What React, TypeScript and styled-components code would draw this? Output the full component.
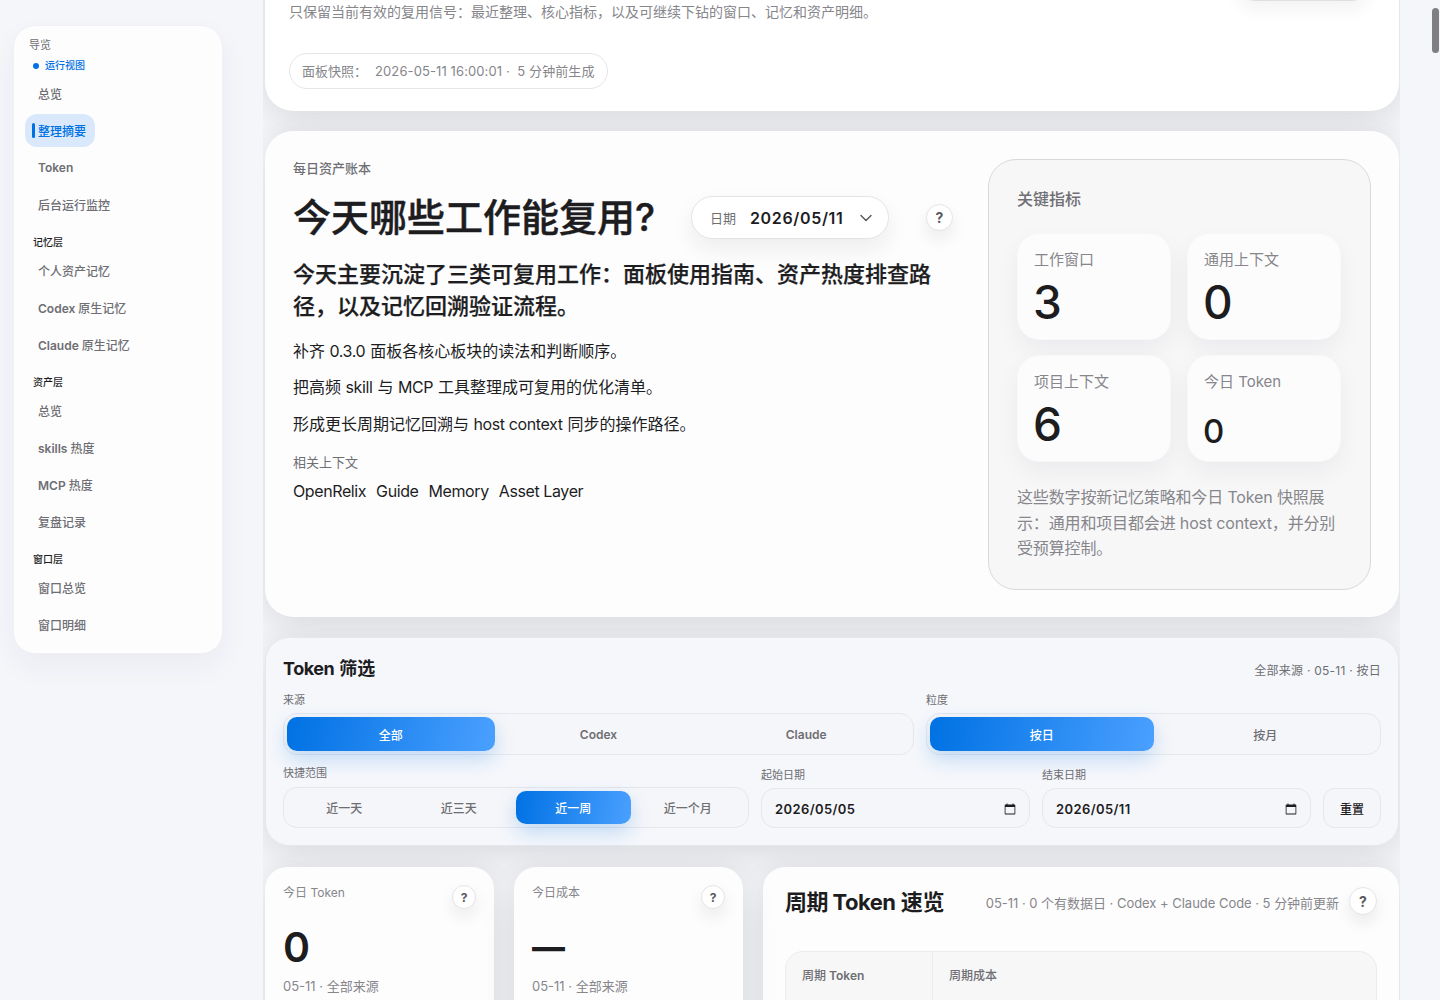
import React from "react";
import styled, { createGlobalStyle } from "styled-components";

const mediumStack = `Inter, "Noto Sans CJK SC Medium", "Noto Sans CJK SC", "Noto Sans", sans-serif`;

const Global = createGlobalStyle`
  html, body { margin: 0; padding: 0; height: 1000px; overflow: hidden; background: #f5f6fa; }
  body { font-family: Inter, "Noto Sans CJK SC", "Noto Sans", sans-serif; color: #1d1d1f; font-synthesis: none; }
  * { box-sizing: border-box; }
`;

const Lat = styled.span`
  letter-spacing: -0.025em;
  padding-right: 0.5px;
`;

const Shell = styled.div`
  display: flex;
  align-items: flex-start;
  height: 1000px;
  overflow: hidden;
  padding-left: 13px;
`;

const Sidebar = styled.nav`
  flex: none;
  width: 210px;
  margin-top: 25px;
  height: 629px;
  padding: 12px 11px;
  background: #fdfdfe;
  border: 1px solid #f0f1f4;
  border-radius: 22px;
  box-shadow: 0 12px 30px rgba(30, 40, 70, 0.05);
`;

const NavTitle = styled.div`
  font-size: 11px;
  line-height: 14px;
  padding-left: 4px;
  color: #6e6e73;
`;

const NavRun = styled.div`
  display: flex;
  align-items: center;
  gap: 6px;
  margin-top: 6px;
  padding-left: 8px;
  font-size: 10px;
  line-height: 15px;
  font-weight: 500;
  color: #0071e3;
  &::before {
    content: "";
    width: 6px;
    height: 6px;
    border-radius: 50%;
    background: #0071e3;
  }
`;

const NavGroup = styled.div`
  display: flex;
  flex-direction: column;
  align-items: flex-start;
  gap: 4px;
  margin-top: 4px;
`;

const NavItem = styled.div<{ $active?: boolean }>`
  position: relative;
  height: 33px;
  display: flex;
  align-items: center;
  padding: 0 9px 0 13px;
  font-family: ${mediumStack};
  font-size: 12px;
  font-weight: 600;
  border-radius: 12px;
  color: ${(p) => (p.$active ? "#0071e3" : "#6e6e73")};
  background: ${(p) => (p.$active ? "#d9e9fb" : "transparent")};
  ${(p) =>
    p.$active
      ? `&::before {
    content: "";
    position: absolute;
    left: 7px;
    top: 9px;
    width: 3px;
    height: 15px;
    border-radius: 2px;
    background: #0071e3;
  }`
      : ""}
`;

const NavSection = styled.div`
  margin: 9px 0 -1px;
  padding: 2px 0 0 8px;
  height: 21px;
  display: flex;
  align-items: center;
  font-family: ${mediumStack};
  font-size: 10px;
  font-weight: 600;
  color: #1d1d1f;
`;

const Column = styled.main`
  flex: none;
  width: 1137px;
  height: 1000px;
  margin-left: 40px;
  padding: 0 1px 0 2px;
  overflow: hidden;
  display: flex;
  flex-direction: column;
  gap: 20px;
`;

const cardShadow = "0 18px 40px rgba(29, 29, 31, 0.08), 0 0 26px rgba(29, 29, 31, 0.05)";

const TopCard = styled.section`
  flex: none;
  margin-top: -60px;
  padding: 20px 32px 22px 24px;
  background: #fff;
  border-radius: 0 0 28px 28px;
  box-shadow: ${cardShadow};
`;

const TopRow = styled.div`
  display: flex;
  justify-content: flex-end;
  height: 41px;
`;

const TopAction = styled.div`
  width: 127px;
  height: 41px;
  background: #fff;
  border: 1px solid #dfdfe3;
  border-radius: 14px;
  box-shadow: 0 8px 18px rgba(29, 29, 31, 0.06);
`;

const TopDesc = styled.p`
  margin: 1px 0 0;
  font-size: 14px;
  line-height: 20px;
  color: #86868b;
`;

const SnapPill = styled.div`
  display: inline-flex;
  align-items: center;
  gap: 8px;
  height: 36px;
  margin-top: 31px;
  padding: 0 12px 2px;
  font-size: 13px;
  color: #86868b;
  background: #fff;
  border: 1px solid #e6e6ea;
  border-radius: 18px;
`;

const SnapValue = styled.span`
  letter-spacing: 0.008em;
`;

const LedgerCard = styled.section`
  flex: none;
  display: grid;
  grid-template-columns: 1fr 383px;
  gap: 35px;
  padding: 28px 28px 27px;
  background: #fdfdfe;
  border-radius: 28px;
  box-shadow: ${cardShadow};
`;

const Ledger = styled.div`
  display: flex;
  flex-direction: column;
`;

const Eyebrow = styled.div`
  font-size: 13px;
  line-height: 18px;
  color: #6e6e73;
  font-weight: 500;
`;

const TitleRow = styled.div`
  display: flex;
  align-items: center;
  height: 43px;
  margin-top: 19px;
`;

const HeroTitle = styled.h1`
  flex: none;
  width: 362px;
  margin: 0;
  font-family: ${mediumStack};
  font-size: 38px;
  line-height: 43px;
  font-weight: 500;
  -webkit-text-stroke: 0.45px #1d1d1f;
  white-space: nowrap;
  color: #1d1d1f;
`;

const DatePill = styled.div`
  display: flex;
  align-items: center;
  width: 198px;
  height: 43px;
  margin-left: 36px;
  padding: 0 15px 0 18px;
  background: #fff;
  border: 1px solid #e4e4e8;
  border-radius: 22px;
  box-shadow: 0 10px 22px rgba(29, 29, 31, 0.07);
`;

const DateLabel = styled.span`
  font-size: 13px;
  color: #6e6e73;
  margin-right: 14px;
`;

const DateValue = styled.span`
  font-size: 16px;
  font-weight: 600;
  letter-spacing: 0.04em;
  margin-right: auto;
`;

const Help = styled.div<{ $size: number }>`
  flex: none;
  display: flex;
  align-items: center;
  justify-content: center;
  width: ${(p) => p.$size}px;
  height: ${(p) => p.$size}px;
  border-radius: 50%;
  background: #fff;
  border: 1px solid #e4e4e8;
  font-size: ${(p) => (p.$size > 25 ? 14 : 12)}px;
  font-weight: 700;
  color: #57575c;
  box-shadow: 0 8px 16px rgba(29, 29, 31, 0.08);
`;

const HelpEnd = styled(Help)`
  margin-left: auto;
`;

const Sub = styled.h2`
  margin: 19px 0 0;
  font-family: ${mediumStack};
  font-size: 22px;
  line-height: 32px;
  font-weight: 500;
  -webkit-text-stroke: 0.25px #1d1d1f;
`;

const Lines = styled.div`
  display: flex;
  flex-direction: column;
  gap: 10.4px;
  margin-top: 16px;
`;

const Line = styled.p`
  margin: 0;
  font-size: 16px;
  line-height: 26px;
`;

const RelatedLabel = styled.div`
  margin-top: 16px;
  font-size: 13px;
  line-height: 18px;
  color: #6e6e73;
`;

const Tags = styled.div`
  display: flex;
  gap: 10px;
  margin-top: 7px;
  font-size: 16px;
  line-height: 26px;
  letter-spacing: -0.025em;
`;

const Panel = styled.aside`
  height: 431px;
  padding: 29px 29px 0 28px;
  background: #f7f7f8;
  border: 1px solid #d9d9dd;
  border-radius: 28px;
`;

const PanelTitle = styled.div`
  font-family: ${mediumStack};
  font-size: 16px;
  line-height: 20px;
  font-weight: 600;
  color: #6e6e73;
`;

const MetricGrid = styled.div`
  display: grid;
  grid-template-columns: 154px 154px;
  grid-auto-rows: 107px;
  gap: 15px 16px;
  margin-top: 24px;
`;

const Metric = styled.div`
  padding: 15px 16px 0;
  background: #fcfcfd;
  border: 1px solid #f8f8f9;
  border-radius: 22px;
  box-shadow: 0 10px 24px rgba(29, 29, 31, 0.05);
`;

const MetricLabel = styled.div`
  font-size: 15px;
  line-height: 22px;
  color: #86868b;
`;

const MetricValue = styled.div<{ $small?: boolean }>`
  font-size: ${(p) => (p.$small ? 33 : 46)}px;
  line-height: 56px;
  margin-top: ${(p) => (p.$small ? 10 : 3)}px;
  margin-left: -1px;
  font-weight: 500;
  color: #1d1d1f;
`;

const PanelNote = styled.p`
  margin: 23px 0 0;
  max-width: 320px;
  font-size: 16px;
  line-height: 25.6px;
  letter-spacing: -0.15px;
  color: #86868b;
`;

const FilterCard = styled.section`
  flex: none;
  height: 209px;
  padding: 17px;
  background: #f5f7fb;
  border: 1px solid #e6e8ec;
  border-radius: 24px;
  box-shadow: ${cardShadow};
`;

const FilterHead = styled.div`
  display: flex;
  align-items: center;
  justify-content: space-between;
  height: 27px;
`;

const FilterTitle = styled.h3`
  margin: -3px 0 0;
  font-size: 18px;
  font-weight: 700;
`;

const FilterMeta = styled.div`
  font-size: 12px;
  margin-top: 1px;
  letter-spacing: 0.02em;
  color: #6e6e73;
`;

const FilterRowA = styled.div`
  display: grid;
  grid-template-columns: 631px 455px;
  gap: 12px;
  margin-top: 10px;
`;

const FilterRowB = styled.div`
  display: grid;
  grid-template-columns: 466px 269px 269px 58px;
  gap: 12px;
  align-items: end;
  margin-top: 10px;
`;

const Field = styled.div`
  display: flex;
  flex-direction: column;
  min-width: 0;
`;

const FieldLabel = styled.div<{ $gap: number }>`
  font-size: 11px;
  line-height: 16px;
  color: #6e6e73;
  margin-bottom: ${(p) => p.$gap}px;
`;

const Segments = styled.div<{ $height: number }>`
  display: flex;
  height: ${(p) => p.$height}px;
  padding: 3px;
  background: #f5f6f9;
  border: 1px solid #e6e7eb;
  border-radius: 14px;
`;

const Segment = styled.div<{ $active?: boolean; $bold?: boolean }>`
  flex: 1 1 0;
  display: flex;
  align-items: center;
  justify-content: center;
  font-family: ${mediumStack};
  font-size: 12px;
  font-weight: ${(p) => (p.$bold || p.$active ? 600 : 400)};
  color: ${(p) => (p.$active ? "#fff" : "#6e6e73")};
  border-radius: 10px;
  ${(p) =>
    p.$active
      ? `background: linear-gradient(100deg, #0071e3, #4aa0ff);
  box-shadow: 0 8px 20px rgba(0, 113, 227, 0.22);`
      : ""}
`;

const DateField = styled.div`
  display: flex;
  align-items: center;
  justify-content: space-between;
  height: 40px;
  padding: 1px 13px 0;
  font-size: 13px;
  font-weight: 600;
  letter-spacing: 0.03em;
  color: #1d1d1f;
  background: #f5f6f9;
  border: 1px solid #e6e7eb;
  border-radius: 14px;
`;

const ResetBtn = styled.div`
  height: 40px;
  display: flex;
  align-items: center;
  justify-content: center;
  font-family: ${mediumStack};
  font-size: 12px;
  font-weight: 600;
  background: #f5f6f9;
  border: 1px solid #e6e7eb;
  border-radius: 12px;
`;

const StatRow = styled.div`
  flex: none;
  display: grid;
  grid-template-columns: 229px 229px 636px;
  gap: 20px;
  margin-top: 1px;
`;

const StatCard = styled.section`
  position: relative;
  height: 200px;
  padding: 17px 18px;
  background: #fdfdfe;
  border-radius: 22px 22px 0 0;
  box-shadow: ${cardShadow};
`;

const StatLabel = styled.div`
  font-size: 12px;
  line-height: 18px;
  color: #86868b;
`;

const StatHelp = styled(Help)`
  position: absolute;
  top: 18px;
  right: 18px;
`;

const StatValue = styled.div<{ $dash?: boolean }>`
  margin-top: 17px;
  height: 56px;
  font-size: ${(p) => (p.$dash ? 33 : 41)}px;
  line-height: 56px;
  font-weight: ${(p) => (p.$dash ? 800 : 600)};
`;

const StatFoot = styled.div`
  margin-top: 1px;
  font-size: 13px;
  line-height: 20px;
  color: #86868b;
`;

const PeriodCard = styled.section`
  height: 200px;
  padding: 19px 22px;
  background: #fdfdfe;
  border-radius: 22px 22px 0 0;
  box-shadow: ${cardShadow};
`;

const PeriodHead = styled.div`
  display: flex;
  align-items: center;
  height: 30px;
`;

const PeriodTitle = styled.h3`
  margin: -2px auto 0 0;
  font-size: 22px;
  font-weight: 700;
  letter-spacing: -0.01em;
`;

const PeriodMeta = styled.div`
  font-size: 13px;
  margin: 2px 10px 0 0;
  letter-spacing: -0.002em;
  color: #86868b;
`;

const PeriodTable = styled.div`
  display: grid;
  grid-template-columns: 146px 1fr;
  height: 120px;
  margin-top: 35px;
  background: #f7f7f8;
  border: 1px solid #ececef;
  border-radius: 18px;
`;

const PeriodCell = styled.div`
  padding: 15px 16px;
  font-family: ${mediumStack};
  font-size: 12px;
  line-height: 18px;
  font-weight: 600;
  color: #6e6e73;
  & + & {
    border-left: 1px solid #ececef;
  }
`;

const ScrollThumb = styled.div`
  position: fixed;
  top: 8px;
  right: 1px;
  width: 7px;
  height: 45px;
  border-radius: 4px;
  background: #7f7f82;
`;

const nav = [
  { section: null, items: ["总览", "整理摘要", "Token", "后台运行监控"] },
  { section: "记忆层", items: ["个人资产记忆", "Codex 原生记忆", "Claude 原生记忆"] },
  { section: "资产层", items: ["总览", "skills 热度", "MCP 热度", "复盘记录"] },
  { section: "窗口层", items: ["窗口总览", "窗口明细"] },
];

const metrics = [
  { label: "工作窗口", value: "3" },
  { label: "通用上下文", value: "0" },
  { label: "项目上下文", value: "6" },
  { label: "今日 Token", value: "0", small: true },
];

const Chevron = () => (
  <svg width="14" height="14" viewBox="0 0 14 14" fill="none" stroke="#55555a" strokeWidth="1.4" strokeLinecap="round" strokeLinejoin="round">
    <path d="M2 4.5 7 9.5 12 4.5" />
  </svg>
);

const CalendarIcon = () => (
  <svg width="12" height="12" viewBox="0 0 12 12">
    <path d="M2.5 0.5h1v1h5v-1h1v1h1a.8.8 0 0 1 .8.8v8.4a.8.8 0 0 1-.8.8h-9a.8.8 0 0 1-.8-.8V2.3a.8.8 0 0 1 .8-.8h1zM1.5 4v6.5h9V4z" fill="#1d1d1f" />
  </svg>
);

export default function App() {
  return (
    <>
      <Global />
      <Shell>
        <Sidebar>
          <NavTitle>导览</NavTitle>
          <NavRun>运行视图</NavRun>
          {nav.map((g, i) => (
            <React.Fragment key={i}>
              {g.section && <NavSection>{g.section}</NavSection>}
              <NavGroup>
                {g.items.map((it) => (
                  <NavItem key={it} $active={it === "整理摘要"}>{it}</NavItem>
                ))}
              </NavGroup>
            </React.Fragment>
          ))}
        </Sidebar>
        <Column>
          <TopCard>
            <TopRow><TopAction /></TopRow>
            <TopDesc>只保留当前有效的复用信号：最近整理、核心指标，以及可继续下钻的窗口、记忆和资产明细。</TopDesc>
            <SnapPill>
              <span>面板快照：</span>
              <SnapValue>2026-05-11 16:00:01 · &nbsp;5 分钟前生成</SnapValue>
            </SnapPill>
          </TopCard>

          <LedgerCard>
            <Ledger>
              <Eyebrow>每日资产账本</Eyebrow>
              <TitleRow>
                <HeroTitle>今天哪些工作能复用?</HeroTitle>
                <DatePill>
                  <DateLabel>日期</DateLabel>
                  <DateValue>2026/05/11</DateValue>
                  <Chevron />
                </DatePill>
                <HelpEnd $size={27}>?</HelpEnd>
              </TitleRow>
              <Sub>今天主要沉淀了三类可复用工作：面板使用指南、资产热度排查路径，以及记忆回溯验证流程。</Sub>
              <Lines>
                <Line>补齐 <Lat>0.3.0</Lat> 面板各核心板块的读法和判断顺序。</Line>
                <Line>把高频 <Lat>skill</Lat> 与 <Lat>MCP</Lat> 工具整理成可复用的优化清单。</Line>
                <Line>形成更长周期记忆回溯与 <Lat>host context</Lat> 同步的操作路径。</Line>
              </Lines>
              <RelatedLabel>相关上下文</RelatedLabel>
              <Tags>
                <span>OpenRelix</span>
                <span>Guide</span>
                <span>Memory</span>
                <span>Asset Layer</span>
              </Tags>
            </Ledger>
            <Panel>
              <PanelTitle>关键指标</PanelTitle>
              <MetricGrid>
                {metrics.map((m) => (
                  <Metric key={m.label}>
                    <MetricLabel>{m.label}</MetricLabel>
                    <MetricValue $small={m.small}>{m.value}</MetricValue>
                  </Metric>
                ))}
              </MetricGrid>
              <PanelNote>这些数字按新记忆策略和今日 Token 快照展示：通用和项目都会进 host context，并分别受预算控制。</PanelNote>
            </Panel>
          </LedgerCard>

          <FilterCard>
            <FilterHead>
              <FilterTitle><Lat>Token</Lat> 筛选</FilterTitle>
              <FilterMeta>全部来源 · 05-11 · 按日</FilterMeta>
            </FilterHead>
            <FilterRowA>
              <Field>
                <FieldLabel $gap={5}>来源</FieldLabel>
                <Segments $height={42}>
                  <Segment $active>全部</Segment>
                  <Segment $bold>Codex</Segment>
                  <Segment $bold>Claude</Segment>
                </Segments>
              </Field>
              <Field>
                <FieldLabel $gap={5}>粒度</FieldLabel>
                <Segments $height={42}>
                  <Segment $active>按日</Segment>
                  <Segment>按月</Segment>
                </Segments>
              </Field>
            </FilterRowA>
            <FilterRowB>
              <Field>
                <FieldLabel $gap={6}>快捷范围</FieldLabel>
                <Segments $height={41}>
                  <Segment>近一天</Segment>
                  <Segment>近三天</Segment>
                  <Segment $active>近一周</Segment>
                  <Segment>近一个月</Segment>
                </Segments>
              </Field>
              <Field>
                <FieldLabel $gap={5}>起始日期</FieldLabel>
                <DateField>2026/05/05<CalendarIcon /></DateField>
              </Field>
              <Field>
                <FieldLabel $gap={5}>结束日期</FieldLabel>
                <DateField>2026/05/11<CalendarIcon /></DateField>
              </Field>
              <ResetBtn>重置</ResetBtn>
            </FilterRowB>
          </FilterCard>

          <StatRow>
            <StatCard>
              <StatLabel>今日 Token</StatLabel>
              <StatHelp $size={24}>?</StatHelp>
              <StatValue>0</StatValue>
              <StatFoot>05-11 · 全部来源</StatFoot>
            </StatCard>
            <StatCard>
              <StatLabel>今日成本</StatLabel>
              <StatHelp $size={24}>?</StatHelp>
              <StatValue $dash>—</StatValue>
              <StatFoot>05-11 · 全部来源</StatFoot>
            </StatCard>
            <PeriodCard>
              <PeriodHead>
                <PeriodTitle><Lat>周期 Token</Lat> 速览</PeriodTitle>
                <PeriodMeta>05-11 · 0 个有数据日 · Codex + Claude Code · 5 分钟前更新</PeriodMeta>
                <Help $size={28}>?</Help>
              </PeriodHead>
              <PeriodTable>
                <PeriodCell>周期 Token</PeriodCell>
                <PeriodCell>周期成本</PeriodCell>
              </PeriodTable>
            </PeriodCard>
          </StatRow>
        </Column>
      </Shell>
      <ScrollThumb />
    </>
  );
}
